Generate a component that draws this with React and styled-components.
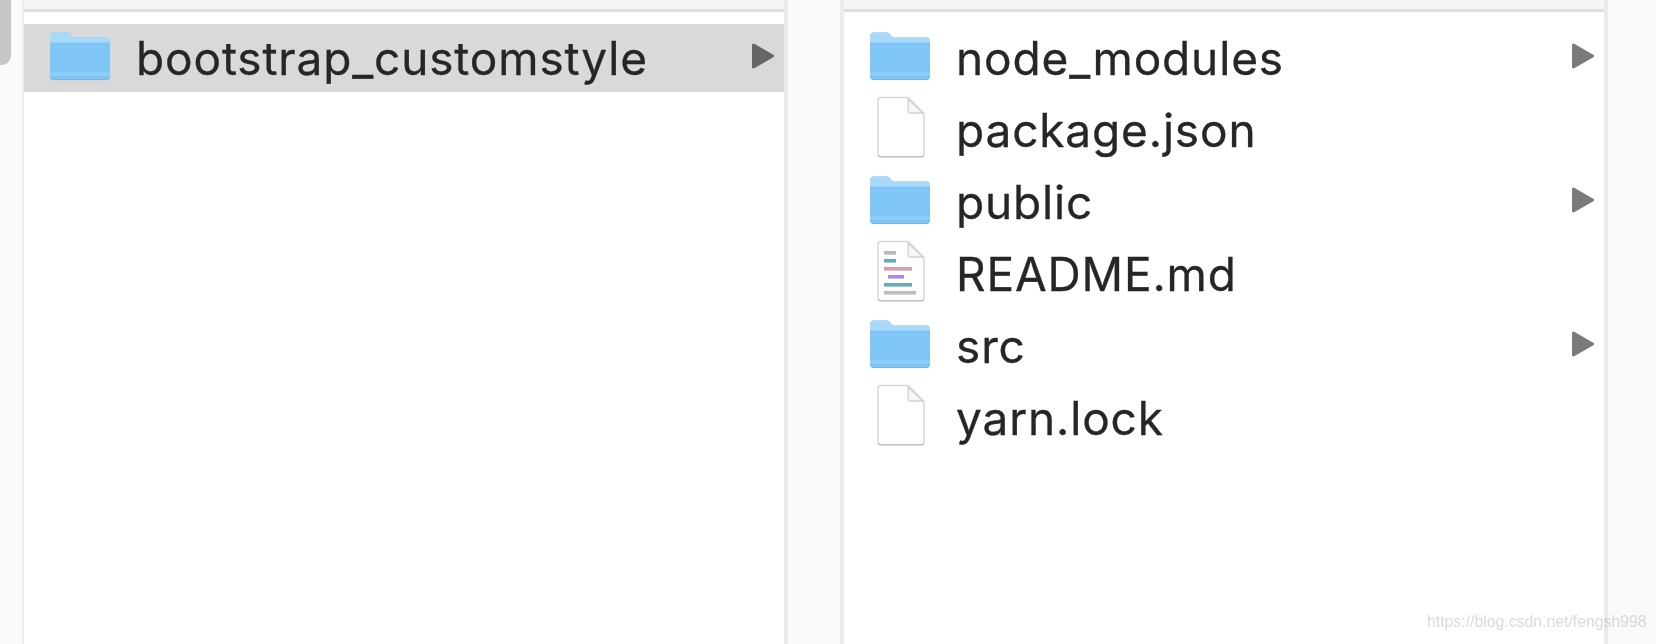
import styled, { createGlobalStyle } from 'styled-components'

const GlobalStyle = createGlobalStyle`
  html, body {
    margin: 0;
    padding: 0;
    background: #fafafa;
  }
  #root {
    height: 644px;
    overflow: hidden;
  }
`

const leftItems = [{ name: 'bootstrap_customstyle', type: 'folder', selected: true }]

const rightItems = [
  { name: 'node_modules', type: 'folder' },
  { name: 'package.json', type: 'file' },
  { name: 'public', type: 'folder' },
  { name: 'README.md', type: 'readme' },
  { name: 'src', type: 'folder' },
  { name: 'yarn.lock', type: 'file' },
]

function FolderIcon() {
  return (
    <IconSvg width='62' height='50' viewBox='0 0 62 50'>
      <path d='M1 5.5C1 3 2.5 1.5 5 1.5H17C19 1.5 20 2 21 3.5L23 6.5H57.5C59.8 6.5 61 7.8 61 10V45C61 47.6 59.6 49 57 49H5C2.4 49 1 47.6 1 45Z' fill='#7fc6f5' />
      <path d='M1 5.5C1 3 2.5 1.5 5 1.5H17C19 1.5 20 2 21 3.5L23 6.5H57.5C59.8 6.5 61 7.8 61 10V11.5H1Z' fill='#a9daf9' />
      <rect x='1' y='41' width='60' height='4' fill='#8bcdf7' />
      <path d='M1.5 45.5C1.5 47.6 2.8 48.6 5 48.6H57C59.2 48.6 60.5 47.6 60.5 45.5' fill='none' stroke='#74b4e2' strokeWidth='1' />
    </IconSvg>
  )
}

function FileIcon({ lines }) {
  return (
    <IconSvg width='62' height='64' viewBox='0 0 62 64'>
      <path d='M8 5C8 3.4 8.9 2.5 10.5 2.5H37C38 2.5 38.8 2.8 39.5 3.6L53 17.5C53.7 18.2 54 19 54 20V59C54 60.8 53 61.8 51.2 61.8H10.5C8.9 61.8 8 60.8 8 59Z' fill='#fff' stroke='#d6d6d6' strokeWidth='1.5' />
      <path d='M8.5 60.6C9 61.4 9.6 61.8 10.5 61.8H51.2C52.4 61.8 53.2 61.4 53.6 60.6' fill='none' stroke='#c4c4c4' strokeWidth='1.4' />
      <path d='M38 4V15C38 17 39 18 41 18H53Z' fill='#f6f6f6' stroke='#d2d2d2' strokeWidth='1.3' strokeLinejoin='round' />
      {lines &&
        <>
          <rect x='14' y='12' width='12' height='3.6' fill='#b9b9b9' />
          <rect x='14' y='20' width='12' height='3.6' fill='#68acb6' />
          <rect x='14' y='28' width='28' height='3.6' fill='#d5a0a8' />
          <rect x='18' y='36' width='16' height='3.6' fill='#a98bf0' />
          <rect x='14' y='44' width='28' height='3.6' fill='#68acb6' />
          <rect x='14' y='52' width='32' height='3.6' fill='#bdbdbd' />
        </>
      }
    </IconSvg>
  )
}

function Arrow() {
  return (
    <ArrowSvg width='24' height='28' viewBox='0 0 24 28'>
      <path d='M2.5 3L21.5 14L2.5 25Z' fill='currentColor' stroke='currentColor' strokeWidth='3' strokeLinejoin='round' />
    </ArrowSvg>
  )
}

function Row({ item }) {
  return (
    <RowStyled selected={item.selected}>
      <IconSlot lift={item.type === 'folder' ? 4 : 6} nudge={item.type === 'folder' ? 25 : 26}>
        {item.type === 'folder' ? <FolderIcon /> : <FileIcon lines={item.type === 'readme'} />}
      </IconSlot>
      <Name nudge={item.type === 'folder' ? 25 : 24}>{item.name}</Name>
      {item.type === 'folder' && <Arrow />}
    </RowStyled>
  )
}

export default function App() {
  return (
    <Page>
      <GlobalStyle />
      <LeftGutter>
        <Tab />
      </LeftGutter>
      <Column>
        <ColumnHeader />
        <List>
          {leftItems.map(item => <Row key={item.name} item={item} />)}
        </List>
      </Column>
      <Divider />
      <Column second>
        <ColumnHeader />
        <List>
          {rightItems.map(item => <Row key={item.name} item={item} />)}
        </List>
      </Column>
      <Watermark>https://blog.csdn.net/fengsh998</Watermark>
    </Page>
  )
}

const Page = styled.div`
  position: relative;
  display: flex;
  width: 1656px;
  height: 644px;
  background: #fafafa;
  font-family: Inter, 'Liberation Sans', sans-serif;
`

const LeftGutter = styled.div`
  width: 22px;
  flex-shrink: 0;
`

const Tab = styled.div`
  width: 11px;
  height: 65px;
  background: #c6c6c6;
  border-bottom-right-radius: 9px;
`

const Column = styled.div`
  box-sizing: border-box;
  display: flex;
  flex-direction: column;
  width: ${props => (props.second ? '768px' : '766px')};
  background: #fff;
  border-left: ${props => (props.second ? '4px' : '2px')} solid #ececec;
  border-right: 4px solid #e9e9e9;
`

const ColumnHeader = styled.div`
  box-sizing: border-box;
  height: 12px;
  flex-shrink: 0;
  background: #f5f5f5;
  border-bottom: 3px solid #dfdfdf;
`

const List = styled.div`
  display: flex;
  flex-direction: column;
  gap: 4px;
  padding-top: 12px;
`

const Divider = styled.div`
  width: 52px;
  flex-shrink: 0;
`

const RowStyled = styled.div`
  display: flex;
  align-items: center;
  height: 68px;
  padding-right: 9px;
  background: ${props => (props.selected ? '#d9d9d9' : 'transparent')};
  color: ${props => (props.selected ? '#666' : '#7b7b7b')};
`

const IconSlot = styled.div`
  display: flex;
  justify-content: center;
  width: 62px;
  margin-left: ${props => props.nudge}px;
  padding-bottom: ${props => props.lift}px;
  flex-shrink: 0;
`

const IconSvg = styled.svg`
  display: block;
  filter: blur(0.5px);
`

const ArrowSvg = styled.svg`
  flex-shrink: 0;
  margin-bottom: 4px;
  filter: blur(0.5px);
`

const Name = styled.span`
  flex: 1;
  margin-left: ${props => props.nudge}px;
  font-size: 46px;
  line-height: 68px;
  letter-spacing: 0.85px;
  color: #262626;
  -webkit-text-stroke: 0.3px #262626;
  white-space: nowrap;
  filter: blur(0.5px);
`

const Watermark = styled.div`
  position: absolute;
  left: 1427px;
  top: 612px;
  font-family: 'Liberation Sans', sans-serif;
  font-size: 15.8px;
  line-height: 20px;
  color: rgba(150, 150, 150, 0.35);
  white-space: nowrap;
  filter: blur(0.4px);
`
